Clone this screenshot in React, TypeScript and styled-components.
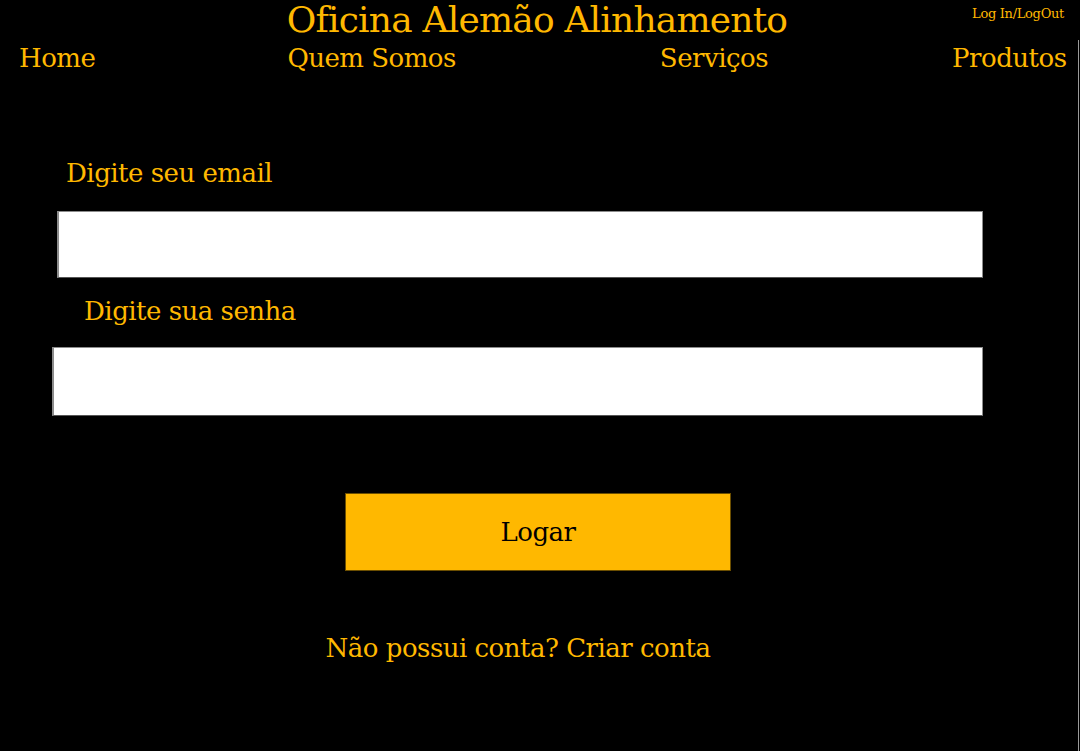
import React from "react";
import styled, { createGlobalStyle } from "styled-components";

const GOLD = "#ffb800";
const FONT = `"DejaVu Serif", "Liberation Serif", serif`;

const Global = createGlobalStyle`
  html, body { margin: 0; padding: 0; background: #000; }
  body { font-family: ${FONT}; }
  * { box-sizing: border-box; }
`;

const Page = styled.div`
  width: 1080px;
  min-height: 751px;
  background: #000;
  color: ${GOLD};
  font-family: ${FONT};
  display: flex;
  flex-direction: column;
`;

const Header = styled.header`
  position: relative;
  height: 40px;
  display: flex;
  justify-content: center;
`;

const Title = styled.h1`
  margin: 0 0 0 -6px;
  font-size: 36px;
  font-weight: 400;
  line-height: 40px;
  letter-spacing: -0.8px;
`;

const AuthLink = styled.a`
  position: absolute;
  top: 6px;
  right: 16px;
  font-size: 13px;
  color: ${GOLD};
  text-decoration: none;
  letter-spacing: -0.3px;
`;

const Body = styled.div`
  flex: 1;
  width: 1079px;
  border-right: 1px solid #9a9a9a;
  display: flex;
  flex-direction: column;
`;

const Nav = styled.nav`
  display: flex;
  align-items: center;
  height: 36px;
`;

const NavLink = styled.a<{ $gap: number }>`
  margin-left: ${(p) => p.$gap}px;
  font-size: 26px;
  color: ${GOLD};
  text-decoration: none;
  letter-spacing: -0.5px;
`;

const Form = styled.form`
  display: flex;
  flex-direction: column;
  padding-top: 79px;
`;

const Label = styled.label<{ $indent: number; $top?: number; $gap: number }>`
  display: block;
  margin: ${(p) => p.$top ?? 0}px 0 0 ${(p) => p.$indent}px;
  padding-bottom: ${(p) => p.$gap}px;
  font-size: 26px;
  line-height: 36px;
  letter-spacing: -0.5px;
`;

const Field = styled.input<{ $left: number; $h: number }>`
  display: block;
  margin-left: ${(p) => p.$left}px;
  width: ${(p) => 983 - p.$left}px;
  height: ${(p) => p.$h}px;
  background: #fff;
  border: 1px solid #8c8c8c;
  border-left-width: 2px;
  border-bottom-color: #555;
  outline: none;
  font-family: ${FONT};
  font-size: 20px;
`;

const Button = styled.button`
  align-self: flex-start;
  margin: 77px 0 0 345px;
  width: 386px;
  height: 78px;
  background: ${GOLD};
  border: 1px solid #6b4e00;
  color: #000;
  font-family: ${FONT};
  font-size: 26px;
  letter-spacing: -0.5px;
  cursor: pointer;
`;

const Footer = styled.p`
  margin: 59px 0 0;
  text-align: center;
  padding-right: 42px;
  font-size: 26px;
  line-height: 36px;
  letter-spacing: -0.5px;
`;

export default function App() {
  return (
    <>
      <Global />
      <Page>
        <Header>
          <Title>Oficina Alemão Alinhamento</Title>
          <AuthLink href="#">Log In/LogOut</AuthLink>
        </Header>
        <Body>
          <Nav>
            <NavLink href="#" $gap={19}>Home</NavLink>
            <NavLink href="#" $gap={192}>Quem Somos</NavLink>
            <NavLink href="#" $gap={204}>Serviços</NavLink>
            <NavLink href="#" $gap={184}>Produtos</NavLink>
          </Nav>
          <Form onSubmit={(e) => e.preventDefault()}>
            <Label $indent={66} $gap={20} htmlFor="email">Digite seu email</Label>
            <Field id="email" type="email" $left={57} $h={67} />
            <Label $indent={84} $top={15} $gap={18} htmlFor="senha">Digite sua senha</Label>
            <Field id="senha" type="password" $left={52} $h={69} />
            <Button type="submit">Logar</Button>
            <Footer>Não possui conta? Criar conta</Footer>
          </Form>
        </Body>
      </Page>
    </>
  );
}
